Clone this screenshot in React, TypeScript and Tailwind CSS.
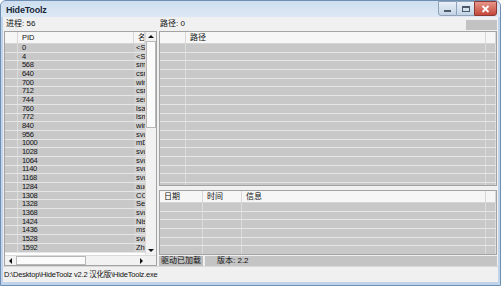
import React from 'react';

const procs: [string, string][] = [
  ['0', '<System Idle>'],
  ['4', '<System>'],
  ['568', 'smss.exe'],
  ['640', 'csrss.exe'],
  ['700', 'wininit.exe'],
  ['712', 'csrss.exe'],
  ['744', 'services.exe'],
  ['760', 'lsass.exe'],
  ['772', 'lsm.exe'],
  ['840', 'winlogon.exe'],
  ['956', 'svchost.exe'],
  ['1000', 'mDNSResponder.exe'],
  ['1028', 'svchost.exe'],
  ['1064', 'svchost.exe'],
  ['1140', 'svchost.exe'],
  ['1168', 'svchost.exe'],
  ['1284', 'audiodg.exe'],
  ['1308', 'CCenter.exe'],
  ['1328', 'SearchIndexer.exe'],
  ['1368', 'svchost.exe'],
  ['1424', 'NisSrv.exe'],
  ['1436', 'msdtc.exe'],
  ['1528', 'svchost.exe'],
  ['1592', 'ZhuDongFangYu.exe'],
];

function Arrow({ dir }: { dir: 'up' | 'down' | 'left' | 'right' }) {
  const pts = {
    up: '1,5 7,5 4,2',
    down: '1,2 7,2 4,5',
    left: '5,1 5,7 2,4',
    right: '3,1 3,7 6,4',
  }[dir];
  return (
    <svg width="8" height="8" viewBox="0 0 8 8">
      <polygon points={pts} fill="#111" />
    </svg>
  );
}

function HeaderCell({ children, className = '' }: { children?: React.ReactNode; className?: string }) {
  return (
    <div className={`h-full flex items-center pl-[4px] leading-none border-r border-[#d8d8d8] overflow-hidden whitespace-nowrap ${className}`}>
      {children}
    </div>
  );
}

function EmptyRows({ count, cols }: { count: number; cols: string[] }) {
  return (
    <>
      {Array.from({ length: count }).map((_, i) => (
        <div key={i} className="h-[8.7px] flex shrink-0 bg-[#c8c8c8] border-b border-[#e6e6e6] box-border">
          {cols.map((c, j) => (
            <div key={j} className={`${c} h-full border-r border-[#dcdcdc]`} />
          ))}
        </div>
      ))}
    </>
  );
}

function LeftPanel() {
  return (
    <div className="w-[153px] flex flex-col shrink-0">
      <div className="h-[14px] flex items-center pl-[2px] text-[8px] leading-none">进程: 56</div>
      <div className="flex-1 min-h-0 flex flex-col border border-[#a3a3a3] bg-white">
        <div className="flex-1 min-h-0 flex">
          <div className="flex-1 min-w-0 flex flex-col overflow-hidden">
            <div className="h-[12px] shrink-0 flex bg-[#f6f6f6] border-b border-[#d5d5d5] text-[7.5px]">
              <HeaderCell className="w-[13px] shrink-0" />
              <HeaderCell className="w-[116px] shrink-0">PID</HeaderCell>
              <HeaderCell className="flex-1 pl-[2px]">名称</HeaderCell>
            </div>
            {procs.map(([pid, name]) => (
              <div key={pid} className="h-[8.7px] shrink-0 flex bg-[#c8c8c8] border-b border-[#e6e6e6] box-border text-[7.5px] leading-[8px]">
                <div className="w-[13px] shrink-0 h-full border-r border-[#dcdcdc]" />
                <div className="w-[116px] shrink-0 h-full pl-[4px] flex items-center tracking-[-0.3px]">{pid}</div>
                <div className="flex-1 h-full pl-[2px] flex items-center overflow-hidden whitespace-nowrap bg-[#d0d0d0]">{name}</div>
              </div>
            ))}
          </div>
          <div className="w-[11px] shrink-0 flex flex-col bg-[#f2f2f2] border-l border-[#dadada]">
            <div className="h-[9px] flex items-center justify-center"><Arrow dir="up" /></div>
            <div className="h-[87px] bg-[#fbfbfb] border border-[#b8b8b8]" />
            <div className="flex-1" />
            <div className="h-[9px] flex items-center justify-center"><Arrow dir="down" /></div>
          </div>
        </div>
        <div className="h-[10px] shrink-0 flex bg-[#f2f2f2] border-t border-[#dadada]">
          <div className="w-[11px] flex items-center justify-center"><Arrow dir="left" /></div>
          <div className="w-[70px] bg-[#fbfbfb] border border-[#b8b8b8]" />
          <div className="flex-1" />
          <div className="w-[9px] flex items-center justify-center"><Arrow dir="right" /></div>
          <div className="w-[11px] bg-[#f0f0f0]" />
        </div>
      </div>
    </div>
  );
}

function RightPanel() {
  const topCols = ['w-[26px] shrink-0', 'flex-1', 'w-[10px] shrink-0'];
  const bottomCols = ['w-[43px] shrink-0', 'w-[39px] shrink-0', 'flex-1', 'w-[10px] shrink-0'];
  return (
    <div className="flex-1 min-w-0 flex flex-col ml-[2px] mr-[1px]">
      <div className="h-[14px] flex items-center">
        <div className="pl-[1px] text-[8px] leading-none flex-1">路径: 0</div>
        <div className="w-[31px] h-[10px] mt-[2px] bg-[#c2c2c2]" />
      </div>
      <div className="h-[155px] shrink-0 flex flex-col border border-[#a3a3a3] bg-white overflow-hidden">
        <div className="h-[12px] shrink-0 flex bg-[#f6f6f6] border-b border-[#d5d5d5] text-[8px]">
          <HeaderCell className="w-[26px] shrink-0" />
          <HeaderCell className="flex-1">路径</HeaderCell>
          <HeaderCell className="w-[10px] shrink-0" />
        </div>
        <EmptyRows count={17} cols={topCols} />
      </div>
      <div className="h-[4px] shrink-0" />
      <div className="h-[65px] shrink-0 flex flex-col border border-[#a3a3a3] bg-white overflow-hidden">
        <div className="h-[12px] shrink-0 flex bg-[#f6f6f6] border-b border-[#d5d5d5] text-[8px]">
          <HeaderCell className="w-[43px] shrink-0">日期</HeaderCell>
          <HeaderCell className="w-[39px] shrink-0">时间</HeaderCell>
          <HeaderCell className="flex-1">信息</HeaderCell>
          <HeaderCell className="w-[10px] shrink-0" />
        </div>
        <EmptyRows count={6} cols={bottomCols} />
      </div>
      <div className="h-[10px] shrink-0 mt-[1px] flex gap-[2px] text-[8px] leading-none">
        <div className="w-[44px] bg-[#bdbdbd] flex items-center pl-[2px]">驱动已加载</div>
        <div className="flex-1 bg-[#c4c4c4] flex items-center pl-[12px]">版本: 2.2</div>
      </div>
    </div>
  );
}

function TitleBar() {
  return (
    <div className="h-[16px] shrink-0 flex items-start bg-gradient-to-b from-[#cfdff0] to-[#dce8f5]">
      <div className="pl-[5px] pt-[3px] text-[9px] font-bold text-[#1b2a3a] tracking-[-0.2px]">HideToolz</div>
      <div className="flex-1" />
      <div className="flex mr-[3px]">
        <div className="w-[19px] h-[15px] rounded-bl-[3px] border border-[#8ea3ba] bg-gradient-to-b from-[#e9f0f7] to-[#c3d3e4] flex items-end justify-center pb-[3px]">
          <div className="w-[7px] h-[2px] bg-[#4a5a6c]" />
        </div>
        <div className="w-[17px] h-[15px] border-y border-[#8ea3ba] bg-gradient-to-b from-[#e9f0f7] to-[#c3d3e4] flex items-center justify-center">
          <div className="w-[8px] h-[6px] border border-[#4a5a6c] border-t-2" />
        </div>
        <div className="w-[23px] h-[15px] rounded-br-[3px] border border-[#8c3a33] bg-gradient-to-b from-[#e5958a] to-[#c4463a] flex items-center justify-center">
          <svg width="9" height="8" viewBox="0 0 9 8">
            <path d="M1.5 1 L7.5 7 M7.5 1 L1.5 7" stroke="#fff" strokeWidth="1.8" />
          </svg>
        </div>
      </div>
    </div>
  );
}

export default function App() {
  return (
    <div className="w-[501px] h-[286px] overflow-hidden flex flex-col bg-[#bfd4ea] border border-[#6f8fb3] rounded-t-[6px] text-[#111] [font-family:'Liberation_Sans','Noto_Sans_CJK_SC',sans-serif]">
      <TitleBar />
      <div className="flex-1 min-h-0 mx-[2px] flex flex-col bg-[#f0f0f0]">
        <div className="flex-1 min-h-0 flex pl-[1px]">
          <LeftPanel />
          <RightPanel />
        </div>
        <div className="h-[16px] shrink-0 flex items-center pl-[1px] text-[7.5px] tracking-[-0.2px] border-t border-[#d8d8d8]">
          D:\Desktop\HideToolz v2.2 汉化版\HideToolz.exe
        </div>
      </div>
      <div className="h-[3px] shrink-0" />
    </div>
  );
}
